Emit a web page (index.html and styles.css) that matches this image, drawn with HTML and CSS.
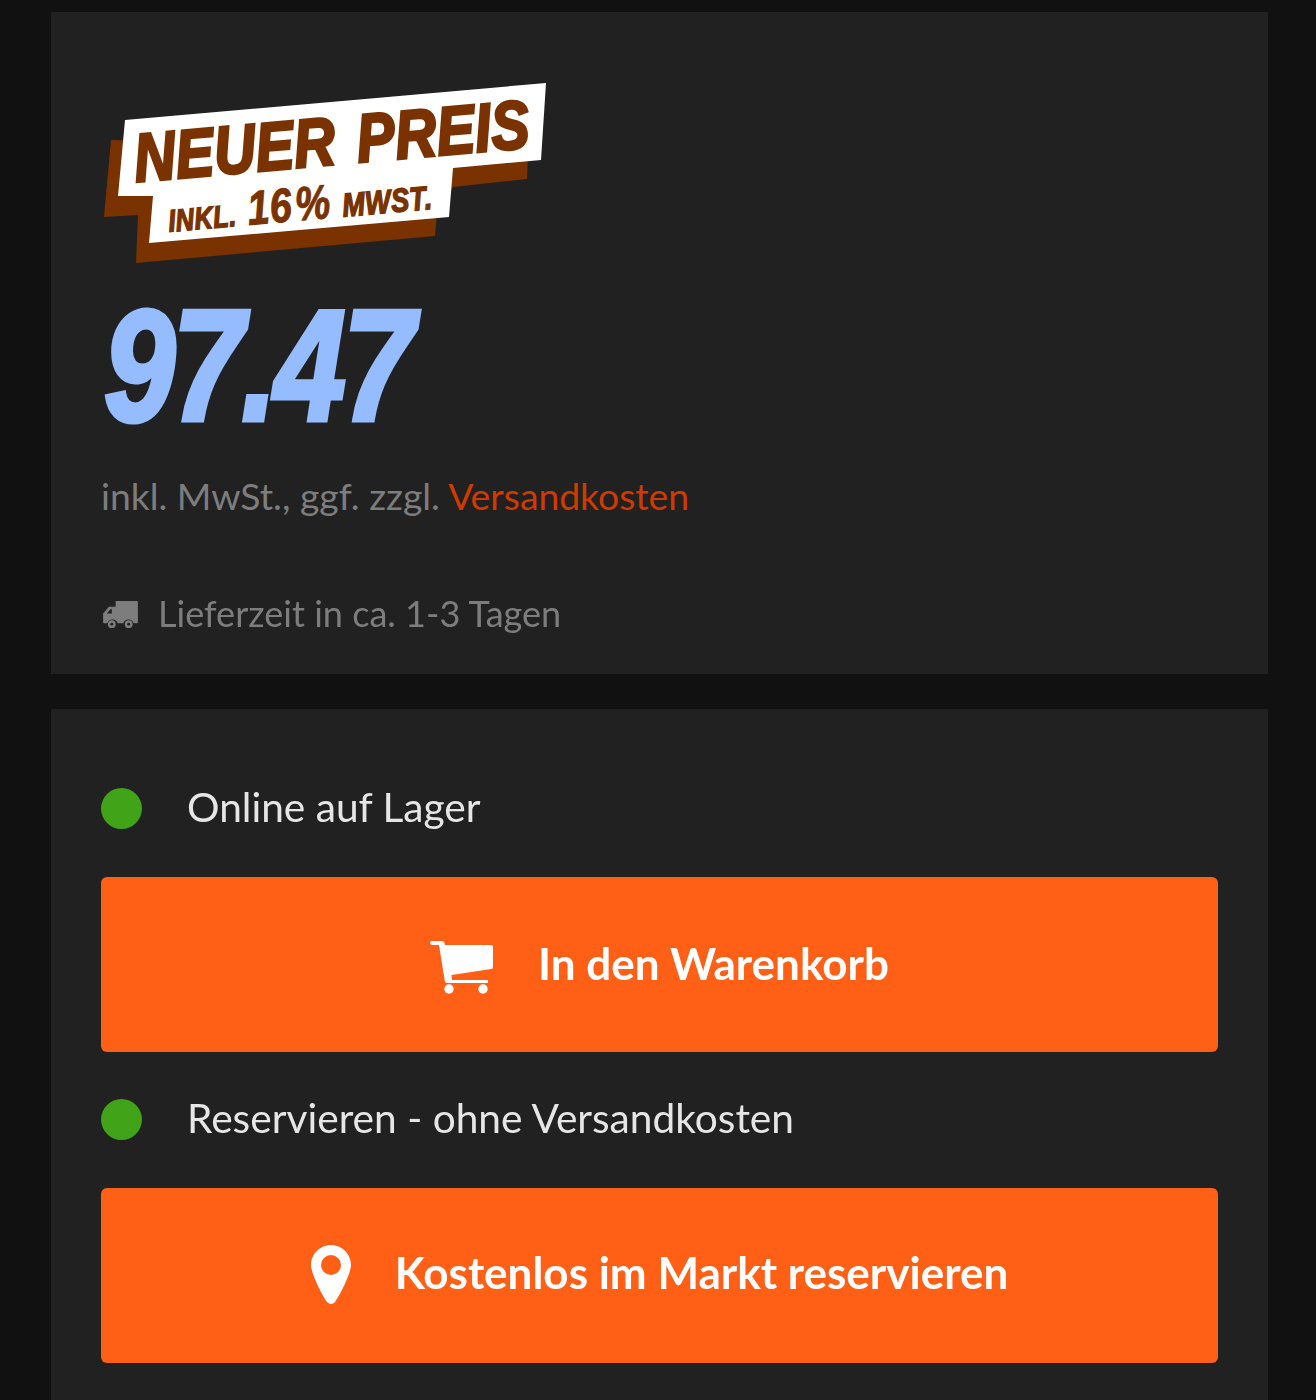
FILE: index.html
```html
<!DOCTYPE html>
<html lang="de">
<head>
<meta charset="utf-8">
<title>Preis</title>
<link rel="stylesheet" href="styles.css">
</head>
<body>
<main class="page">
  <section class="card price-card">
    <div class="badge">
      <svg class="badge-bg" viewBox="0 0 444 182" width="444" height="182" aria-hidden="true">
        <polygon fill="#7a3300" points="7,58 0,135 34,133 32,181 331,154 333,130 349,105 423,97 424,70"/>
        <polygon fill="#ffffff" points="21,38 442,1 437,78 349,86 345,135 45,161 49,114 14,114"/>
      </svg>
      <span class="badge-main">NEUER PREIS</span>
      <span class="badge-sub">INKL. <b>16 %</b> <span class="badge-vat">MWST.</span></span>
    </div>
    <div class="price">97.47</div>
    <p class="tax">inkl. MwSt., ggf. zzgl. <a class="ship">Versandkosten</a></p>
    <p class="delivery">
      <svg class="truck" viewBox="0 0 36 30" width="35" height="29" aria-hidden="true">
        <path fill="#7d7d7d" fill-rule="evenodd" d="M13 1h22a1 1 0 0 1 1 1v21a1 1 0 0 1-1 1h-3.500a5.500 5.500 0 0 0-10.500 0h-6a5.500 5.500 0 0 0-10.500 0H1a1 1 0 0 1-1-1v-9l6-7h7zM4 14h5V9.500H7.500z"/>
        <circle fill="#7d7d7d" cx="9" cy="25" r="4"/><circle fill="#7d7d7d" cx="26.500" cy="25" r="4"/>
        <circle fill="#212121" cx="9" cy="25" r="1.500"/><circle fill="#212121" cx="26.500" cy="25" r="1.500"/>
      </svg>
      <span>Lieferzeit in ca. 1-3 Tagen</span>
    </p>
  </section>
  <section class="card stock-card">
    <div class="status"><i class="dot"></i><span>Online auf Lager</span></div>
    <button class="cta cta-cart">
      <svg class="cart" viewBox="0 0 64 53" width="64" height="53" aria-hidden="true">
        <path fill="#fff" d="M2 0H12Q14 0 14.500 2L15 4H61Q63 4 63 6V26Q63 28 61 28L21.500 34L22 39H58V42H17Q15 42 14.700 39.500L9 4H2Q0 4 0 2Q0 0 2 0z"/>
        <circle fill="#fff" cx="19" cy="48" r="4.700"/><circle fill="#fff" cx="53" cy="48" r="4.700"/>
      </svg>
      <span class="cta-label">In den Warenkorb</span>
    </button>
    <div class="status"><i class="dot"></i><span>Reservieren - ohne Versandkosten</span></div>
    <button class="cta cta-pin">
      <svg class="pin" viewBox="0 0 40 60" width="40" height="60" aria-hidden="true">
        <path fill="#fff" fill-rule="evenodd" d="M20 0C9 0 0 9 0 20C0 28 11 50 16 57Q20 61 24 57C29 50 40 28 40 20C40 9 31 0 20 0zM20 10a10 10 0 1 1 0 20 10 10 0 0 1 0-20z"/>
      </svg>
      <span class="cta-label">Kostenlos im Markt reservieren</span>
    </button>
  </section>
</main>
</body>
</html>
```

FILE: styles.css
```css
* { box-sizing: border-box; }
html, body { margin: 0; padding: 0; }
body { background: #111111; font-family: Lato, "Liberation Sans", sans-serif; height: 1400px; overflow: hidden; }
.page { padding: 12px 48px 0 51px; display: flex; flex-direction: column; gap: 35px; filter: blur(.6px); }
.card { background: #212121; padding: 0 50px; }
.price-card { height: 662px; padding-top: 70px; }
.badge { position: relative; width: 444px; height: 182px; margin-left: 3px; }
.badge-bg { display: block; }
.badge-main, .badge-sub { position: absolute; font-family: "Liberation Sans", sans-serif; font-weight: 700; font-style: italic; color: #7a3300; white-space: nowrap; transform-origin: 0 0; -webkit-text-stroke: 3px #7a3300; }
.badge-main { left: 27px; top: 42px; font-size: 68px; line-height: 68px; word-spacing: 6px; letter-spacing: .5px; transform: rotate(-5deg) scaleX(.84); }
.badge-sub { left: 62px; top: 114px; font-size: 31px; line-height: 40px; word-spacing: 5px; letter-spacing: .5px; -webkit-text-stroke-width: 1.500px; transform: rotate(-5deg) scaleX(.82); }
.badge-sub b { font-size: 48px; word-spacing: -10px; -webkit-text-stroke-width: 1px; }
.badge-vat { font-size: 33px; }
.price { margin: 39px 0 0 3px; font-family: "Liberation Sans", sans-serif; font-weight: 700; font-style: italic; font-size: 158px; line-height: 124px; letter-spacing: -3px; color: #95bcff; -webkit-text-stroke: 5px #95bcff; transform: scaleX(.81); transform-origin: 0 0; }
.tax { margin: 47px 0 0; font-size: 37.300px; line-height: 44px; color: #7d7d7d; }
.ship { color: #cf3a00; }
.delivery { margin: 75px 0 0 2px; display: flex; align-items: center; gap: 20px; font-size: 36.100px; line-height: 40px; color: #7d7d7d; }
.truck { margin-top: 2px; }
.stock-card { height: 700px; padding-top: 78px; }
.status { display: flex; align-items: center; gap: 45px; height: 42px; font-size: 40.650px; color: #e6e6e6; }
.status span { margin-top: -4px; }
.dot { width: 41px; height: 41px; border-radius: 50%; background: #40a318; flex: none; }
.cta { width: 100%; height: 175px; border: 0; border-radius: 6px; background: #ff6016; color: #fff; font: 700 44px Lato, "Liberation Sans", sans-serif; display: flex; align-items: center; justify-content: center; margin: 0; }
.cta-label { margin-top: -4px; }
.cta-pin .cta-label { margin-top: -8px; }
.cart { margin-top: 6px; }
.pin { margin-bottom: 2px; }
.cta-cart { gap: 44px; margin: 48px 0 46px; }
.cta-pin { gap: 44px; margin-top: 48px; }
```
